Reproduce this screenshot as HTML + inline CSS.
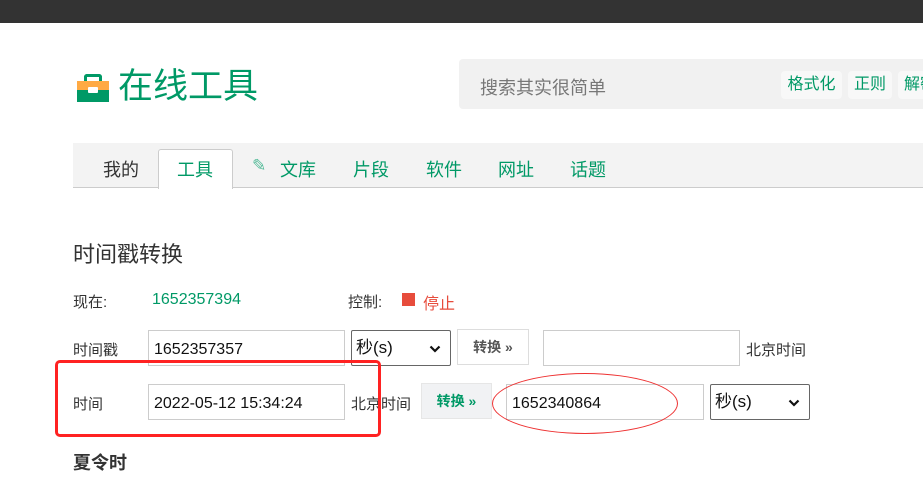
<!DOCTYPE html>
<html><head><meta charset="utf-8"><style>
*{margin:0;padding:0;box-sizing:border-box}
body{width:923px;height:496px;overflow:hidden;background:#fff;font-family:"Liberation Sans","Noto Sans CJK SC",sans-serif;color:#333;position:relative}
.a{position:absolute;white-space:nowrap}
.top{left:0;top:0;width:923px;height:23px;background:#333}
.inp{position:absolute;border:1px solid #ccc;background:#fff;font-size:16px;color:#111;padding-left:5px;padding-top:2px;line-height:34px;height:36px}
.sel{position:absolute;border:1px solid #666;border-radius:2px;background:#fff;font-size:17px;color:#111;padding-left:4px;line-height:34px;height:36px}
.sel svg{position:absolute;right:9px;top:14px}
.btn{position:absolute;border:1px solid #ddd;background:#fff;font-size:14px;font-weight:bold;color:#555;text-align:center;line-height:34px;height:36px}
.tab{position:absolute;top:156px;font-size:18px;color:#009966}
</style></head><body>
<div class="a top"></div>
<div class="a" style="left:77px;top:74px;width:32px;height:28px">
<div class="a" style="left:7px;top:0;width:18px;height:9px;border:3px solid #009966;border-bottom:none;border-radius:3px 3px 0 0"></div>
<div class="a" style="left:0;top:7px;width:32px;height:9px;background:#ffaa44"></div>
<div class="a" style="left:0;top:16px;width:32px;height:12px;background:#009966"></div>
<div class="a" style="left:11px;top:13px;width:10px;height:6px;background:#fff;border-radius:1px"></div>
</div>
<div class="a" style="left:118px;top:63px;font-size:35px;color:#009966;line-height:48px">在线工具</div>
<div class="a" style="left:459px;top:59px;width:470px;height:50px;background:#f1f1f1;border-radius:4px"></div>
<div class="a" style="left:480px;top:74px;font-size:18px;color:#777">搜索其实很简单</div>
<div class="a" style="left:781px;top:71px;width:61px;height:28px;background:#f8f8f8;border-radius:4px;font-size:16px;color:#009966;text-align:center;line-height:28px">格式化</div>
<div class="a" style="left:848px;top:71px;width:44px;height:28px;background:#f8f8f8;border-radius:4px;font-size:16px;color:#009966;text-align:center;line-height:28px">正则</div>
<div class="a" style="left:898px;top:71px;width:40px;height:28px;background:#f8f8f8;border-radius:4px;font-size:16px;color:#009966;padding-left:6px;line-height:28px">解密</div>
<div class="a" style="left:73px;top:143px;width:850px;height:45px;background:#f3f3f3;border-bottom:1px solid #ccc"></div>
<div class="a" style="left:158px;top:149px;width:75px;height:40px;background:#fff;border:1px solid #ccc;border-bottom:none;border-radius:3px 3px 0 0"></div>
<div class="tab" style="left:103px;color:#333">我的</div>
<div class="tab" style="left:177px">工具</div>
<div class="tab" style="left:252px;font-size:17px;color:#5b9">✎</div>
<div class="tab" style="left:280px">文库</div>
<div class="tab" style="left:353px">片段</div>
<div class="tab" style="left:426px">软件</div>
<div class="tab" style="left:498px">网址</div>
<div class="tab" style="left:570px">话题</div>
<div class="a" style="left:73px;top:237px;font-size:22px;color:#333">时间戳转换</div>
<div class="a" style="left:73px;top:291px;font-size:15px">现在:</div>
<div class="a" style="left:152px;top:291px;font-size:16px;color:#009966">1652357394</div>
<div class="a" style="left:348px;top:291px;font-size:15px">控制:</div>
<div class="a" style="left:402px;top:293px;width:13px;height:13px;background:#e74c3c"></div>
<div class="a" style="left:423px;top:290px;font-size:16px;color:#e74c3c">停止</div>

<div class="a" style="left:73px;top:339px;font-size:15px">时间戳</div>
<div class="inp" style="left:148px;top:330px;width:197px">1652357357</div>
<div class="sel" style="left:351px;top:330px;width:100px">秒(s)<svg width="12" height="8" viewBox="0 0 12 8"><path d="M1.5 1.5 L6 6 L10.5 1.5" fill="none" stroke="#111" stroke-width="2.2"/></svg></div>
<div class="btn" style="left:457px;top:329px;width:72px">转换 »</div>
<div class="inp" style="left:543px;top:330px;width:197px"></div>
<div class="a" style="left:746px;top:339px;font-size:15px">北京时间</div>

<div class="a" style="left:73px;top:393px;font-size:15px">时间</div>
<div class="inp" style="left:148px;top:384px;width:197px">2022-05-12 15:34:24</div>
<div class="a" style="left:351px;top:393px;font-size:15px">北京时间</div>
<div class="btn" style="left:421px;top:383px;width:71px;background:#f1f2f4;border-color:#e6e6e6;color:#009966">转换 »</div>
<div class="inp" style="left:506px;top:384px;width:198px">1652340864</div>
<div class="sel" style="left:710px;top:384px;width:100px">秒(s)<svg width="12" height="8" viewBox="0 0 12 8"><path d="M1.5 1.5 L6 6 L10.5 1.5" fill="none" stroke="#111" stroke-width="2.2"/></svg></div>
<div class="a" style="left:55px;top:360px;width:326px;height:77px;border:3px solid #f22;border-radius:5px"></div>
<div class="a" style="left:492px;top:373px;width:186px;height:61px;border:1px solid #e33;border-radius:50%"></div>
<div class="a" style="left:73px;top:449px;font-size:18px;font-weight:bold">夏令时</div>
</body></html>
